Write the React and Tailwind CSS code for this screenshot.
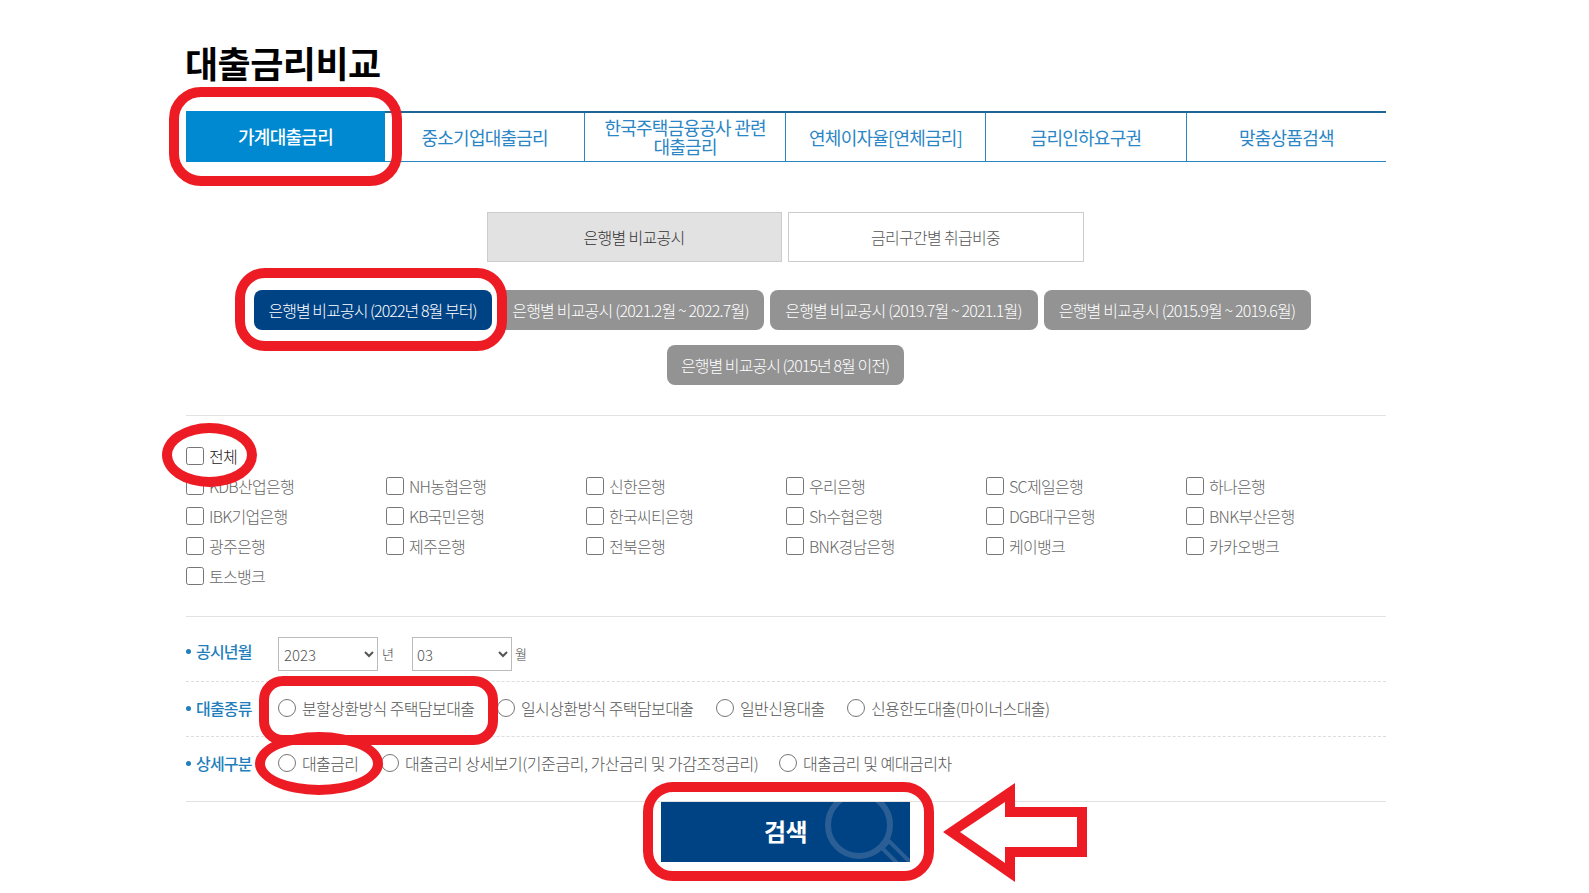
const font = { fontFamily: '"Noto Sans CJK KR","Noto Sans",sans-serif' };

const tabs = ["중소기업대출금리", "한국주택금융공사 관련\n대출금리", "연체이자율[연체금리]", "금리인하요구권", "맞춤상품검색"];
const periods = [
  ["은행별 비교공시 (2021.2월 ~ 2022.7월)", "w-[266px]"],
  ["은행별 비교공시 (2019.7월 ~ 2021.1월)", "w-[268px]"],
  ["은행별 비교공시 (2015.9월 ~ 2019.6월)", "w-[267px]"],
];
const banks = [
  "KDB산업은행", "NH농협은행", "신한은행", "우리은행", "SC제일은행", "하나은행",
  "IBK기업은행", "KB국민은행", "한국씨티은행", "Sh수협은행", "DGB대구은행", "BNK부산은행",
  "광주은행", "제주은행", "전북은행", "BNK경남은행", "케이뱅크", "카카오뱅크",
  "토스뱅크",
];

function Check({ label, dark }) {
  return (
    <label className={`flex items-center h-[30px] text-[16px] tracking-[-0.7px] font-light ${dark ? "text-[#222222]" : "text-[#666666]"}`}>
      <input type="checkbox" className="w-[18px] h-[18px] m-0 mr-[5px] shrink-0" />
      <span>{label}</span>
    </label>
  );
}

function Radio({ label, name, w, track = "tracking-[-0.6px]" }) {
  return (
    <label className={`flex items-center text-[16px] font-light text-[#555555] ${track} ${w}`}>
      <input type="radio" name={name} className="w-[18px] h-[18px] m-0 mr-[6px] shrink-0" />
      <span className="whitespace-nowrap">{label}</span>
    </label>
  );
}

function RowLabel({ children }) {
  return (
    <div className="w-[92px] shrink-0 flex items-center gap-[5px] text-[16px] tracking-[-0.8px] font-medium text-[#1f7fbd]">
      <span className="w-[5px] h-[5px] rounded-full bg-[#1f7fbd]" />
      <span>{children}</span>
    </div>
  );
}

const pill = "h-[40px] rounded-[8px] text-white text-[16px] font-light flex items-center justify-center whitespace-nowrap";

export default function App() {
  return (
    <div className="relative h-[893px] w-[1589px] overflow-hidden bg-white" style={font}>
      <main className="w-[1200px] ml-[186px]">
        <h1 className="h-[111px] pt-[36px] -ml-px text-[36px] leading-[52px] font-bold tracking-[-0.5px] text-black">대출금리비교</h1>

        <div className="flex h-[51px] border-t-2 border-t-[#1d6796] border-b border-b-[#2a88c0]">
          <div className="w-[199px] shrink-0 -mt-[2px] -mb-px">
            <div className="h-full bg-[#0089d0] text-white text-[18px] tracking-[-0.7px] font-medium flex items-center justify-center">가계대출금리</div>
          </div>
          {tabs.map((t, i) => (
            <div
              key={t}
              className={`flex-1 flex items-center justify-center text-center whitespace-pre-line leading-[19px] text-[18px] tracking-[-0.75px] text-[#2a86c5] ${i > 0 ? "border-l border-l-[#2a88c0]" : ""}`}
            >
              {t}
            </div>
          ))}
        </div>

        <div className="flex justify-center gap-[6px] mt-[50px] pr-[2px]">
          <div className="w-[295px] h-[50px] border border-[#cccccc] bg-[#e2e2e2] flex items-center justify-center text-[16px] tracking-[-0.7px] font-light text-[#333333]">은행별 비교공시</div>
          <div className="w-[296px] h-[50px] border border-[#cccccc] bg-white flex items-center justify-center text-[16px] tracking-[-0.7px] font-light text-[#555555]">금리구간별 취급비중</div>
        </div>

        <div className="flex justify-center gap-x-[6px] mt-[28px] pr-[8px]">
          <div className={`w-[238px] bg-[#004385] tracking-[-0.95px] ${pill}`}>은행별 비교공시 (2022년 8월 부터)</div>
          {periods.map(([p, w]) => (
            <div key={p} className={`${w} bg-[#939393] tracking-[-0.8px] ${pill}`}>{p}</div>
          ))}
        </div>
        <div className="flex justify-center mt-[15px] pr-[2px]">
          <div className={`w-[237px] bg-[#939393] tracking-[-0.95px] ${pill}`}>은행별 비교공시 (2015년 8월 이전)</div>
        </div>

        <section className="mt-[30px] h-[202px] border-y border-[#e2e2e2] pt-[25px]">
          <Check label="전체" dark />
          <div className="grid grid-cols-6 auto-rows-[30px]">
            {banks.map((b) => <Check key={b} label={b} />)}
          </div>
        </section>

        <div className="flex items-start pt-[20px] h-[65px] border-b border-dashed border-[#dddddd]">
          <div className="h-[28px] flex items-center"><RowLabel>공시년월</RowLabel></div>
          <select defaultValue="2023" className="w-[100px] h-[34px] border border-[#bbbbbb] pl-px text-[15px] font-light text-[#555555]">
            <option>2023</option>
          </select>
          <span className="w-[34px] pl-[4px] leading-[34px] text-[13px] text-[#444444] font-light">년</span>
          <select defaultValue="03" className="w-[100px] h-[34px] border border-[#bbbbbb] text-[15px] font-light text-[#555555]">
            <option>03</option>
          </select>
          <span className="pl-[3px] leading-[34px] text-[13px] text-[#444444] font-light">월</span>
        </div>

        <div className="flex items-center h-[55px] pb-[2px] border-b border-dashed border-[#dddddd]">
          <RowLabel>대출종류</RowLabel>
          <Radio name="kind" w="w-[219px]" label="분할상환방식 주택담보대출" />
          <Radio name="kind" w="w-[219px]" label="일시상환방식 주택담보대출" />
          <Radio name="kind" w="w-[131px]" label="일반신용대출" />
          <Radio name="kind" w="" label="신용한도대출(마이너스대출)" />
        </div>

        <div className="flex items-center h-[65px] pb-[12px] border-b border-[#e2e2e2]">
          <RowLabel>상세구분</RowLabel>
          <Radio name="detail" w="w-[103px]" label="대출금리" />
          <Radio name="detail" w="w-[398px]" track="tracking-[-0.45px]" label="대출금리 상세보기(기준금리, 가산금리 및 가감조정금리)" />
          <Radio name="detail" w="" track="tracking-[-0.45px]" label="대출금리 및 예대금리차" />
        </div>

        <div className="flex justify-center pr-[1px]">
          <button className="relative w-[249px] h-[60px] pb-[2px] overflow-hidden bg-[#004385] text-white text-[24px] font-bold tracking-[-0.5px]">
            검색
            <svg className="absolute left-[150px] top-0" width="99" height="60" viewBox="0 0 99 60" fill="none">
              <circle cx="48" cy="23" r="31" stroke="#2a5e95" strokeWidth="6" />
              <path d="M71 46l7-7 22 22-7 7z" stroke="#2a5e95" strokeWidth="4" />
            </svg>
          </button>
        </div>
      </main>

      {/* red annotations */}
      <div className="absolute left-[169px] top-[87px] w-[233px] h-[99px] border-[10px] border-[#ed1c24] rounded-[32px]" />
      <div className="absolute left-[235px] top-[268px] w-[272px] h-[83px] border-[10px] border-[#ed1c24] rounded-[30px]" />
      <div className="absolute left-[162px] top-[423px] w-[95px] h-[64px] border-[10px] border-[#ed1c24] rounded-[50%]" />
      <div className="absolute left-[259px] top-[676px] w-[239px] h-[69px] border-[10px] border-[#ed1c24] rounded-[24px]" />
      <div className="absolute left-[255px] top-[732px] w-[128px] h-[63px] border-[10px] border-[#ed1c24] rounded-[50%]" />
      <div className="absolute left-[643px] top-[782px] w-[291px] h-[99px] border-[10px] border-[#ed1c24] rounded-[30px]" />
      <svg className="absolute left-0 top-0 pointer-events-none" width="1589" height="893">
        <path
          fillRule="evenodd"
          fill="#ed1c24"
          d="M943 832L1015 783V807H1087V857H1015V882ZM960 832L1005 863V847H1077V817H1005V802Z"
        />
      </svg>
    </div>
  );
}
